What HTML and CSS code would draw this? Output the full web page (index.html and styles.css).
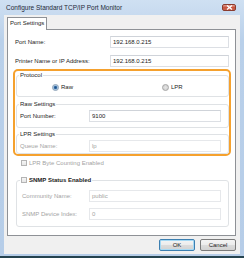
FILE: index.html
```html
<!DOCTYPE html>
<html>
<head>
    <meta charset="utf-8">
    <title>Configure Standard TCP/IP Port Monitor</title>
    <link rel="stylesheet" href="styles.css">
</head>
<body>
    <div id="window">
        <div id="title-bar">
            <div id="title">Configure Standard TCP/IP Port Monitor</div>
            <div id="close-btn">
                <svg width="7" height="5" viewBox="0 0 7 5"><path d="M1 0.5 L6 4.5 M6 0.5 L1 4.5" stroke="#fff" stroke-width="1.3"/></svg>
            </div>
        </div>

        <div id="client">
            <div class="tabs">
                <div class="tab">Port Settings</div>
            </div>

            <div class="panel">
                <div class="row">
                    <label>Port Name:</label>
                    <div class="input">192.168.0.215</div>
                </div>
                <div class="row">
                    <label>Printer Name or IP Address:</label>
                    <div class="input">192.168.0.215</div>
                </div>

                <!-- highlighted part -->
                <div class="highlight">
                    <fieldset class="group">
                        <legend>Protocol</legend>
                        <div class="radios">
                            <div class="option"><span class="radio checked"></span>Raw</div>
                            <div class="option"><span class="radio"></span>LPR</div>
                        </div>
                    </fieldset>

                    <fieldset class="group settings">
                        <legend>Raw Settings</legend>
                        <div class="row">
                            <label>Port Number:</label>
                            <div class="input">9100</div>
                        </div>
                    </fieldset>

                    <fieldset class="group settings last">
                        <legend>LPR Settings</legend>
                        <div class="row disabled">
                            <label>Queue Name:</label>
                            <div class="input">lp</div>
                        </div>
                    </fieldset>
                </div>

                <div class="check-row disabled">
                    <span class="checkbox"></span>LPR Byte Counting Enabled
                </div>

                <fieldset class="group snmp">
                    <legend><span class="checkbox"></span><b>SNMP Status Enabled</b></legend>
                    <div class="row disabled">
                        <label>Community Name:</label>
                        <div class="input">public</div>
                    </div>
                    <div class="row disabled">
                        <label>SNMP Device Index:</label>
                        <div class="input">0</div>
                    </div>
                </fieldset>
            </div>

            <div class="buttons">
                <button class="button default">OK</button>
                <button class="button">Cancel</button>
            </div>
        </div>
    </div>
</body>
</html>
```

FILE: styles.css
```css
body {
    margin: 0px;
    font-family: 'Liberation Sans', Arial, sans-serif;
    font-size: 6px;
    color: #1c1c1c;
}

#window {
    width: 244px;
    height: 256px;
    background: linear-gradient(#cfe0f2, #b9d0ea 40px, #b6cde8);
    border-bottom: 2px solid #25434f;
}

#title-bar {
    height: 15px;
    display: flex;
    align-items: center;
    padding: 0px 8px 0px 6px;
}

#title {
    font-size: 6.5px;
    color: #1e2a38;
}

#close-btn {
    margin-left: auto;
    width: 14px;
    height: 7px;
    box-sizing: border-box;
    border: 1px solid #8a3b2e;
    border-radius: 2px;
    background: linear-gradient(#e3a295, #c8543f 50%, #c9614c);
    display: flex;
    align-items: center;
    justify-content: center;
}

#close-btn svg {
    display: block;
}

#client {
    margin: 0px 4px;
    height: 239px;
    box-sizing: border-box;
    background: #f0f0f0;
    padding: 2px 4px 0px 3px;
}

.tabs {
    display: flex;
    height: 12px;
}

.tab {
    background: #fff;
    border: 1px solid #8e9196;
    border-bottom: none;
    padding: 0px 2px;
    line-height: 11px;
    margin-bottom: -1px;
    position: relative;
    z-index: 1;
}

.panel {
    height: 207px;
    box-sizing: border-box;
    border: 1px solid #8e9196;
    background: #fff;
    padding: 6px 6px 0px 7px;
}

.row {
    display: flex;
    align-items: center;
    height: 12px;
}

.row + .row {
    margin-top: 7px;
}

.row label {
    width: 95px;
    flex: none;
}

.input {
    flex: 1;
    height: 12px;
    box-sizing: border-box;
    border: 1px solid #dcdfe4;
    border-top-color: #cfd3d9;
    padding-left: 2px;
    line-height: 10px;
}

.highlight {
    margin: 2px -2px 0px;
    border: 2px solid #f5a12e;
    border-radius: 5px;
    padding: 0px 0px 0px 1px;
}

.group {
    margin: 0px;
    padding: 0px 7px 0px 3px;
    border: 1px solid #dfe2e5;
    border-radius: 3px;
    min-width: 0px;
}

.group legend {
    padding: 0px 1px;
    margin-left: -1px;
    line-height: 8px;
}

.radios {
    display: grid;
    grid-template-columns: 110px auto;
    padding: 4px 0px 5px 32px;
}

.option {
    display: flex;
    align-items: center;
    gap: 2px;
    height: 8px;
}

.radio {
    width: 7px;
    height: 7px;
    box-sizing: border-box;
    border-radius: 50%;
    border: 1px solid #a4a4a4;
    background: radial-gradient(circle, #e4e4e4, #cdcdcd);
}

.radio.checked {
    border-color: #8aa0b6;
    background: radial-gradient(circle, #1f4f85 0px, #2d67a3 1.2px, #9fbfdc 2px, #e6edf4 3px);
}

.settings {
    margin-top: 3px;
}

.settings .row {
    margin-top: 2px;
    margin-bottom: 5px;
}

.settings.last {
    margin-top: 2px;
}

.settings.last .row {
    margin-bottom: 1px;
}

.settings .row label {
    width: 69px;
}

.disabled {
    color: #a3a3a3;
}

.disabled .input {
    border-color: #e6e8eb;
}

.checkbox {
    width: 6px;
    height: 6px;
    box-sizing: border-box;
    border: 1px solid #b4b4b4;
    background: linear-gradient(#f6f6f6, #e6e6e6);
    flex: none;
}

.check-row {
    display: flex;
    align-items: center;
    gap: 2px;
    height: 8px;
    margin-top: 3px;
    padding-left: 6px;
}

.snmp {
    margin: 9px 0px 0px 1px;
    padding: 0px 7px 6px 5px;
}

.snmp legend {
    display: flex;
    align-items: center;
    gap: 2px;
    margin-left: -2px;
    color: #1c1c1c;
}

.snmp .row:first-of-type {
    margin-top: 6px;
}

.snmp .row + .row {
    margin-top: 6px;
}

.snmp .row label {
    width: 67px;
}

.buttons {
    display: flex;
    justify-content: flex-end;
    gap: 5px;
    margin-top: 3px;
}

.button {
    width: 36px;
    height: 12px;
    padding: 0px;
    font-family: 'Liberation Sans', Arial, sans-serif;
    font-size: 6px;
    color: #1c1c1c;
    border: 1px solid #7b7b7b;
    border-radius: 2px;
    background: linear-gradient(#f4f4f4, #ececec 50%, #dcdcdc 51%, #d2d2d2);
}

.button.default {
    border-color: #3c7fb1;
    box-shadow: inset 0px 0px 0px 1px #a6d9f4;
}
```
